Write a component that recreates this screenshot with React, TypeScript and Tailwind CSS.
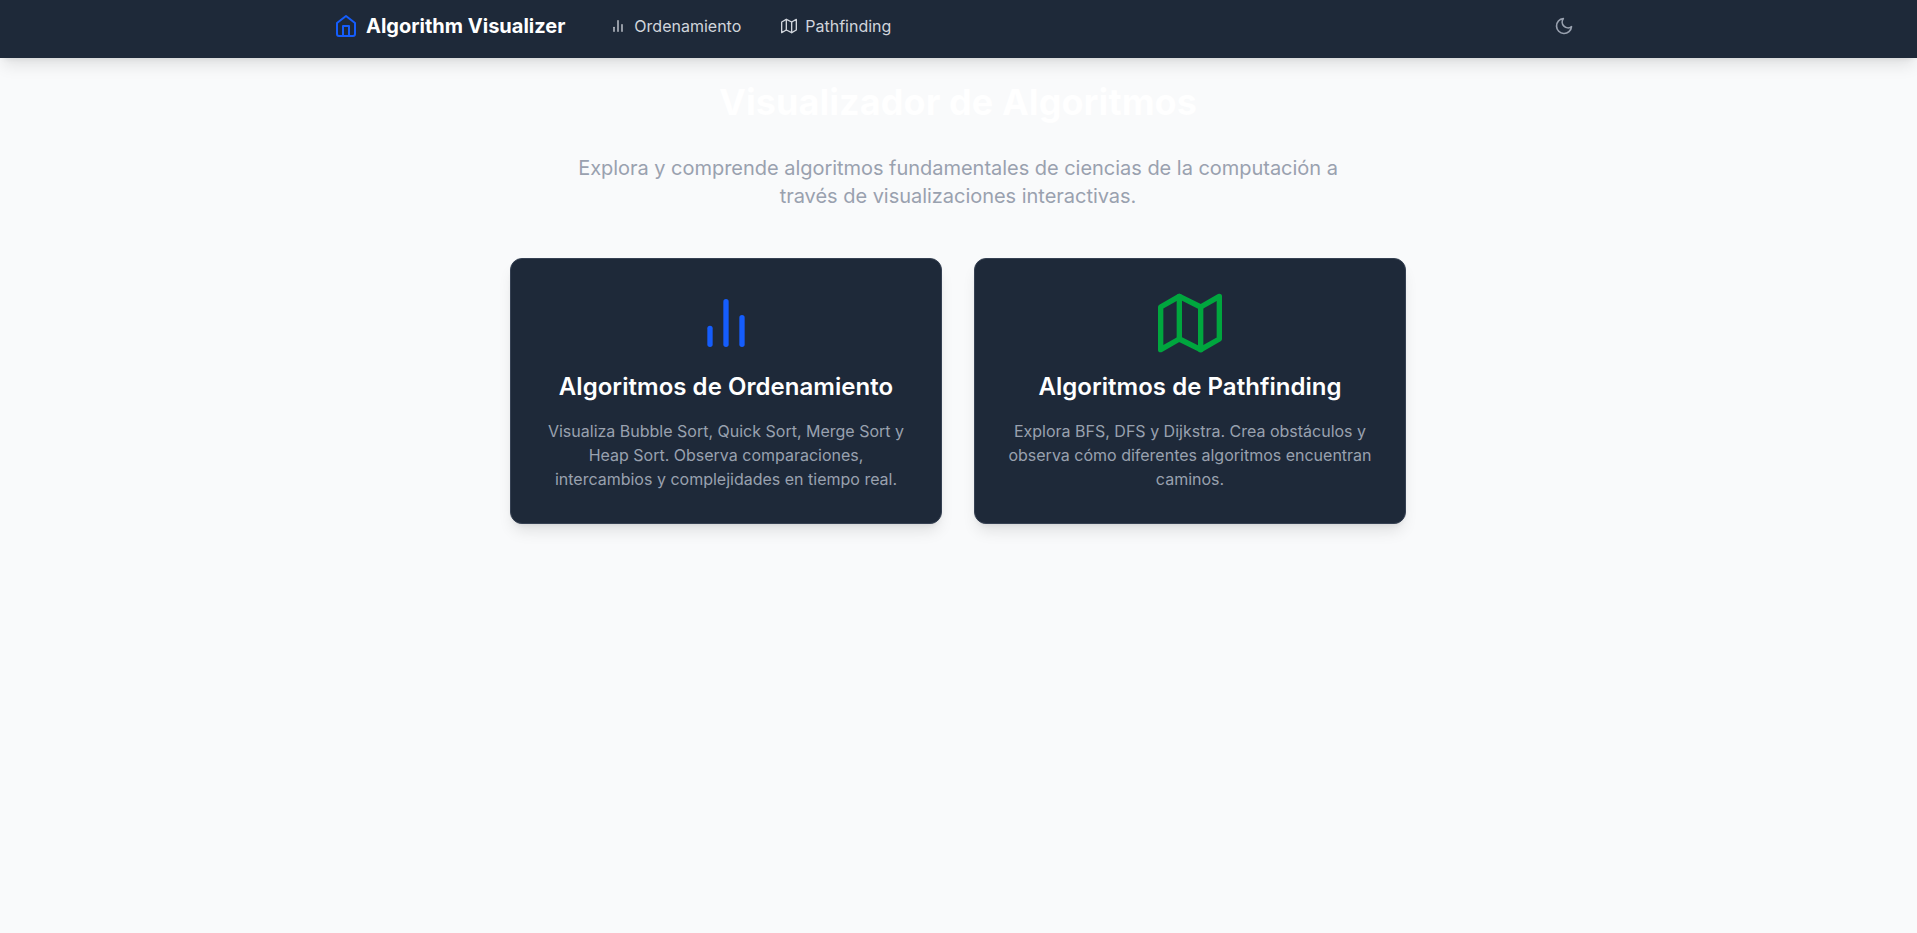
import { FiBarChart2, FiHome, FiMap, FiMoon } from "react-icons/fi";

const cards = [
  {
    title: "Algoritmos de Ordenamiento",
    text: "Visualiza Bubble Sort, Quick Sort, Merge Sort y Heap Sort. Observa comparaciones, intercambios y complejidades en tiempo real.",
    Icon: FiBarChart2,
    color: "text-blue-600",
  },
  {
    title: "Algoritmos de Pathfinding",
    text: "Explora BFS, DFS y Dijkstra. Crea obstáculos y observa cómo diferentes algoritmos encuentran caminos.",
    Icon: FiMap,
    color: "text-green-600",
  },
];

export default function App() {
  return (
    <div className="min-h-screen bg-gray-50 font-['Inter',sans-serif]">
      <nav className="h-[58px] bg-gray-800 pr-px shadow-lg">
        <div className="mx-auto flex h-[52px] max-w-7xl items-center justify-between px-4">
          <div className="flex items-center gap-[33px]">
            <a className="flex items-center gap-2 text-xl font-bold text-white">
              <FiHome className="size-6 text-blue-600" />
              <span>Algorithm Visualizer</span>
            </a>
            <div className="flex items-center gap-4">
              <a className="flex items-center gap-2 px-3 py-2 text-gray-300">
                <FiBarChart2 className="size-4" />
                <span>Ordenamiento</span>
              </a>
              <a className="flex items-center gap-2 px-3 py-2 text-gray-300">
                <FiMap className="size-4" />
                <span>Pathfinding</span>
              </a>
            </div>
          </div>
          <button className="p-2 text-gray-400">
            <FiMoon className="size-5" />
          </button>
        </div>
      </nav>
      <div className="pr-px">
        <main className="mx-auto max-w-4xl pt-6 text-center">
          <h1 className="mb-8 text-4xl font-bold tracking-[0.07px] text-white">Visualizador de Algoritmos</h1>
          <p className="mx-auto mb-12 max-w-[800px] text-xl tracking-[-0.03px] text-gray-400">
            Explora y comprende algoritmos fundamentales de ciencias de la computación a través de visualizaciones interactivas.
          </p>
          <div className="grid grid-cols-2 gap-8">
            {cards.map(({ title, text, Icon, color }) => (
              <div key={title} className="rounded-xl border border-gray-700 bg-gray-800 p-8 shadow-lg">
                <Icon className={`mx-auto mb-4 size-16 ${color}`} />
                <h2 className="mb-4 text-2xl font-semibold tracking-[0.04px] text-white">{title}</h2>
                <p className="text-gray-400">{text}</p>
              </div>
            ))}
          </div>
        </main>
      </div>
    </div>
  );
}
